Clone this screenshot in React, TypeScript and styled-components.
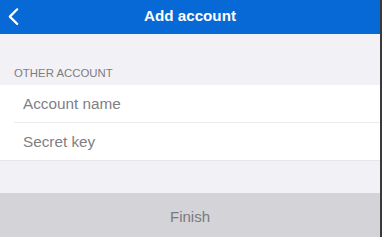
import React from "react";
import styled, { createGlobalStyle } from "styled-components";

const Global = createGlobalStyle`
  html, body { margin: 0; padding: 0; }
  body { font-family: "Liberation Sans", Arial, sans-serif; background: #f2f1f6; }
  * { box-sizing: border-box; }
`;

const Screen = styled.div`
  width: 382px;
  height: 237px;
  display: flex;
  flex-direction: column;
  background: #f2f1f6;
  border-right: 2px solid #3a3a3c;
  overflow: hidden;
`;

const Header = styled.header`
  height: 34px;
  flex: none;
  background: #0769d5;
  display: grid;
  grid-template-columns: 40px 1fr 40px;
  align-items: center;
`;

const BackButton = styled.button`
  border: 0;
  background: none;
  padding: 0 0 0 8px;
  height: 34px;
  display: flex;
  align-items: center;
  cursor: pointer;
`;

const Title = styled.h1`
  margin: 0;
  padding-bottom: 2px;
  text-align: center;
  color: #ffffff;
  font-size: 15.2px;
  font-weight: 700;
  line-height: 18px;
`;

const SectionHeader = styled.div`
  height: 51px;
  flex: none;
  display: flex;
  align-items: flex-end;
  padding: 0 0 5px 14px;
  color: #7d7c82;
  font-size: 11.4px;
  line-height: 14px;
  text-transform: uppercase;
`;

const Group = styled.div`
  flex: none;
  background: #ffffff;
  border-bottom: 1px solid #e7e6ea;
`;

const Row = styled.div<{ $divider?: boolean }>`
  height: ${(p) => (p.$divider ? 38 : 37)}px;
  margin-left: 14px;
  padding-left: 9px;
  display: flex;
  align-items: flex-start;
  border-bottom: ${(p) => (p.$divider ? "1px solid #ebeaee" : "0")};
`;

const Placeholder = styled.span`
  color: #807f84;
  font-size: 15.3px;
  line-height: 37px;
`;

const Footer = styled.button`
  margin-top: auto;
  height: 44px;
  flex: none;
  border: 0;
  width: 100%;
  background: #d4d3d7;
  color: #7a797e;
  font-family: "Liberation Sans", Arial, sans-serif;
  font-size: 15px;
  padding: 2px 0 0 0;
  cursor: pointer;
`;

const Chevron = () => (
  <svg width="14" height="20" viewBox="0 0 14 20" fill="none">
    <polyline
      points="9.2,2.3 1.8,9.6 9.2,16.9"
      stroke="#ffffff"
      strokeWidth="2.2"
      strokeLinecap="round"
      strokeLinejoin="round"
    />
  </svg>
);

export default function App() {
  return (
    <>
      <Global />
      <Screen>
        <Header>
          <BackButton aria-label="Back">
            <Chevron />
          </BackButton>
          <Title>Add account</Title>
          <span />
        </Header>
        <SectionHeader>Other account</SectionHeader>
        <Group>
          <Row $divider>
            <Placeholder>Account name</Placeholder>
          </Row>
          <Row>
            <Placeholder>Secret key</Placeholder>
          </Row>
        </Group>
        <Footer>Finish</Footer>
      </Screen>
    </>
  );
}
